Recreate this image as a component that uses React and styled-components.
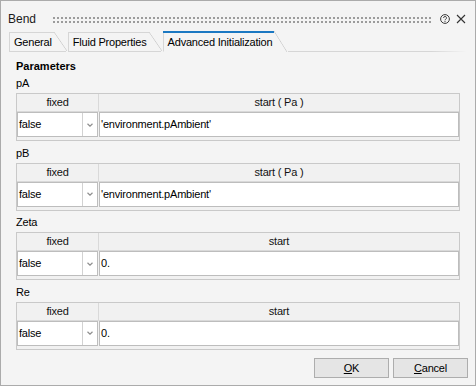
import React from 'react';
import styled, { createGlobalStyle } from 'styled-components';

const Global = createGlobalStyle`
  html, body { margin: 0; padding: 0; background: #f4f4f4; }
  body { font-family: "Liberation Sans", Arial, sans-serif; }
`;

const Window = styled.div`
  box-sizing: border-box;
  width: 476px;
  height: 386px;
  border: 1px solid #ababab;
  background: #f4f4f4;
  display: flex;
  flex-direction: column;
  font-family: "Liberation Sans", Arial, sans-serif;
  font-size: 11px;
  letter-spacing: -0.2px;
  color: #000;
  overflow: hidden;
`;

const TitleBar = styled.div`
  box-sizing: border-box;
  height: 30px;
  padding: 5px 9px 0 7px;
  display: flex;
  align-items: center;
`;

const Title = styled.span`
  font-size: 12px;
  letter-spacing: 0;
  color: #1a1a1a;
`;

const Grip = styled.div`
  flex: 1;
  height: 6px;
  margin: 2px 9px 0 17px;
  background-image: radial-gradient(circle at 1px 1px, #9c9c9c 0.8px, transparent 1.1px);
  background-size: 4px 4px;
`;

const IconButton = styled.span`
  display: inline-flex;
  width: 10px;
  height: 10px;
  margin-left: ${p => p.$ml || 0}px;
  svg { display: block; }
`;

const TabStrip = styled.div`
  height: 21px;
  display: flex;
  align-items: flex-end;
  gap: 2px;
  padding-left: 8px;
  padding-right: 8px;
`;

const Tab = styled.div`
  position: relative;
  box-sizing: border-box;
  height: ${p => (p.$active ? 21 : 20)}px;
  padding: ${p => (p.$active ? 5 : 4)}px 14px 0 4px;
  border-left: 1px solid #d6d6d6;
  border-bottom: 1px solid ${p => (p.$active ? 'transparent' : '#d6d6d6')};
  line-height: 13px;
  white-space: nowrap;
  color: #000;

  &::before {
    content: '';
    position: absolute;
    left: ${p => (p.$active ? -1 : 0)}px;
    right: 12px;
    top: 0;
    height: ${p => (p.$active ? 2 : 1)}px;
    background: ${p => (p.$active ? '#1b78c2' : '#d6d6d6')};
  }

  &::after {
    content: '';
    position: absolute;
    right: -1px;
    top: 0;
    bottom: ${p => (p.$active ? -1 : 0)}px;
    width: 13px;
    background: linear-gradient(
      to top right,
      transparent calc(50% - 0.7px),
      #cfcfcf 50%,
      transparent calc(50% + 0.7px)
    );
  }
`;

const TabFiller = styled.div`
  flex: 1;
  height: 1px;
  background: linear-gradient(to right, #d6d6d6 80%, #f4f4f4);
`;

const Panel = styled.div`
  flex: 1;
  padding: 6px 15px 0 15px;
  overflow: hidden;
`;

const Heading = styled.div`
  font-weight: bold;
  letter-spacing: 0;
  line-height: 16px;
`;

const Section = styled.div`
  margin-bottom: 2.5px;
`;

const SectionLabel = styled.div`
  line-height: 18px;
  padding-bottom: 1px;
`;

const Table = styled.div`
  box-sizing: border-box;
  height: 48px;
  border: 1px solid #c9c9c9;
  background: #f1f1f1;
  padding-bottom: 3px;
`;

const HeaderRow = styled.div`
  display: grid;
  grid-template-columns: 82px 1fr;
  height: 18px;
`;

const HeaderCell = styled.div`
  box-sizing: border-box;
  text-align: center;
  line-height: 17px;
  border-bottom: 1px solid #d9d9d9;
  border-right: ${p => (p.$divider ? '1px solid #d9d9d9' : 'none')};
  color: #111;
`;

const DataRow = styled.div`
  display: grid;
  grid-template-columns: 81px 1fr;
  column-gap: 1px;
  height: 25px;
`;

const Combo = styled.div`
  box-sizing: border-box;
  display: flex;
  background: #fff;
  border: 1px solid #bdbdbd;
`;

const ComboValue = styled.div`
  flex: 1;
  padding-left: 1px;
  line-height: 23px;
  border-right: 1px solid #d2d2d2;
`;

const ComboArrow = styled.div`
  width: 14px;
  display: flex;
  align-items: center;
  justify-content: center;
`;

const TextField = styled.div`
  box-sizing: border-box;
  background: #fff;
  border: 1px solid #bdbdbd;
  padding-left: 1px;
  line-height: 23px;
  white-space: nowrap;
  overflow: hidden;
`;

const Footer = styled.div`
  display: flex;
  justify-content: flex-end;
  gap: 4px;
  padding: 0 7px 7px 0;
`;

const Button = styled.button`
  box-sizing: border-box;
  width: 75px;
  height: 20px;
  border: 1px solid #adadad;
  background: #e5e5e5;
  font-family: inherit;
  font-size: 11px;
  letter-spacing: -0.2px;
  color: #000;
  padding: 0;
  line-height: 18px;
  u { text-decoration-thickness: 1px; text-underline-offset: 1px; }
`;

const HelpIcon = () => (
  <svg width="10" height="10" viewBox="0 0 10 10">
    <circle cx="5" cy="5" r="4.4" fill="none" stroke="#3a3a3a" strokeWidth="1" />
    <path d="M3.6 3.9 A1.45 1.45 0 1 1 5.7 5.2 C5.2 5.5 5 5.8 5 6.3" fill="none" stroke="#3a3a3a" strokeWidth="1" />
    <circle cx="5" cy="7.6" r="0.6" fill="#3a3a3a" />
  </svg>
);

const CloseIcon = () => (
  <svg width="10" height="10" viewBox="0 0 10 10">
    <path d="M1 1 L9 9 M9 1 L1 9" stroke="#333" strokeWidth="1.1" />
  </svg>
);

const Chevron = () => (
  <svg width="6" height="4" viewBox="0 0 6 4">
    <polyline points="0.5,0.8 3,3.2 5.5,0.8" fill="none" stroke="#8f8f8f" strokeWidth="1.2" />
  </svg>
);

const params = [
  { name: 'pA', unit: 'start ( Pa )', value: "'environment.pAmbient'" },
  { name: 'pB', unit: 'start ( Pa )', value: "'environment.pAmbient'" },
  { name: 'Zeta', unit: 'start', value: '0.' },
  { name: 'Re', unit: 'start', value: '0.' },
];

export default function App() {
  return (
    <>
      <Global />
      <Window>
        <TitleBar>
          <Title>Bend</Title>
          <Grip />
          <IconButton><HelpIcon /></IconButton>
          <IconButton $ml={6}><CloseIcon /></IconButton>
        </TitleBar>
        <TabStrip>
          <Tab>General</Tab>
          <Tab>Fluid Properties</Tab>
          <Tab $active>Advanced Initialization</Tab>
          <TabFiller />
        </TabStrip>
        <Panel>
          <Heading>Parameters</Heading>
          {params.map(p => (
            <Section key={p.name}>
              <SectionLabel>{p.name}</SectionLabel>
              <Table>
                <HeaderRow>
                  <HeaderCell $divider>fixed</HeaderCell>
                  <HeaderCell>{p.unit}</HeaderCell>
                </HeaderRow>
                <DataRow>
                  <Combo>
                    <ComboValue>false</ComboValue>
                    <ComboArrow><Chevron /></ComboArrow>
                  </Combo>
                  <TextField>{p.value}</TextField>
                </DataRow>
              </Table>
            </Section>
          ))}
        </Panel>
        <Footer>
          <Button><u>O</u>K</Button>
          <Button><u>C</u>ancel</Button>
        </Footer>
      </Window>
    </>
  );
}
